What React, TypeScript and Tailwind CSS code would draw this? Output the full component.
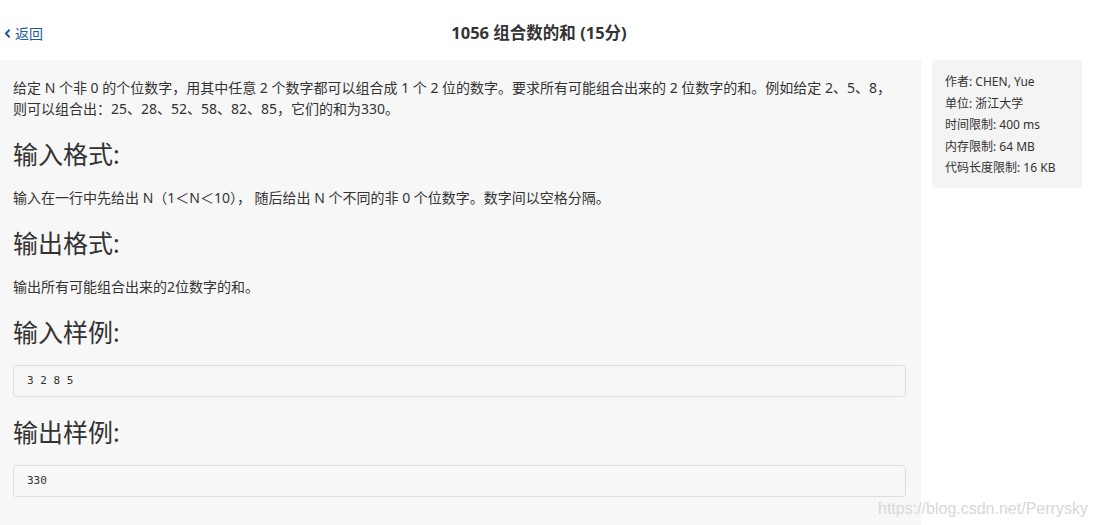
import { ChevronLeft } from 'lucide-react';

const font = { fontFamily: '"Noto Sans", "Noto Sans CJK SC", sans-serif' };

const meta = [
  ['作者', 'CHEN, Yue'],
  ['单位', '浙江大学'],
  ['时间限制', '400 ms'],
  ['内存限制', '64 MB'],
  ['代码长度限制', '16 KB'],
];

const Heading = ({ children }: { children: string }) => (
  <h2 className="text-[25px] leading-[34px] text-[#333] mt-[18px] mb-[16px]">{children}</h2>
);

const Sample = ({ value }: { value: string }) => (
  <pre className="border border-[#dedede] rounded-[3px] bg-[#f7f7f7] h-[32px] px-[13px] mb-[3px] flex items-center text-[11px] text-[#333] font-['DejaVu_Sans_Mono',monospace]">
    {value}
  </pre>
);

export default function App() {
  return (
    <div className="relative w-[1094px] h-[525px] overflow-hidden bg-white text-[#333]" style={font}>
      {/* Header */}
      <div className="h-[60px] pt-[6px] flex items-center">
        <a className="flex items-center text-[14px] text-[#1f5c99] w-[60px] pl-[1px]">
          <ChevronLeft size={13} strokeWidth={3.5} />
          <span className="ml-[1px]">返回</span>
        </a>
        <h1 className="flex-1 text-center text-[16.5px] font-bold pr-[76px]">1056 组合数的和 (15分)</h1>
      </div>

      <div className="flex gap-[11px]">
        {/* Problem body */}
        <div className="w-[921px] h-[465px] bg-[#f7f7f7] pl-[13px] pr-[15px] pt-[17px]">
          <p className="text-[14px] leading-[21px]">
            给定 N 个非 0 的个位数字，用其中任意 2 个数字都可以组合成 1 个 2 位的数字。要求所有可能组合出来的 2 位数字的和。例如给定 2、5、8，
            <br />
            则可以组合出：25、28、52、58、82、85，它们的和为330。
          </p>
          <Heading>输入格式:</Heading>
          <p className="text-[14px] leading-[21px]">输入在一行中先给出 N（1＜N＜10）， 随后给出 N 个不同的非 0 个位数字。数字间以空格分隔。</p>
          <Heading>输出格式:</Heading>
          <p className="text-[14px] leading-[21px]">输出所有可能组合出来的2位数字的和。</p>
          <Heading>输入样例:</Heading>
          <Sample value="3 2 8 5" />
          <Heading>输出样例:</Heading>
          <Sample value="330" />
        </div>

        {/* Meta info */}
        <div className="w-[150px] h-[128px] bg-[#f4f4f4] rounded-[4px] px-[13px] pt-[11px] text-[12px] leading-[21.5px]">
          {meta.map(([k, v]) => (
            <div key={k}>
              {k}: {v}
            </div>
          ))}
        </div>
      </div>

      <div className="absolute left-[878px] top-[497px] text-[16px] text-[#d8d8d8] font-['Liberation_Sans',sans-serif]">
        https://blog.csdn.net/Perrysky
      </div>
    </div>
  );
}
